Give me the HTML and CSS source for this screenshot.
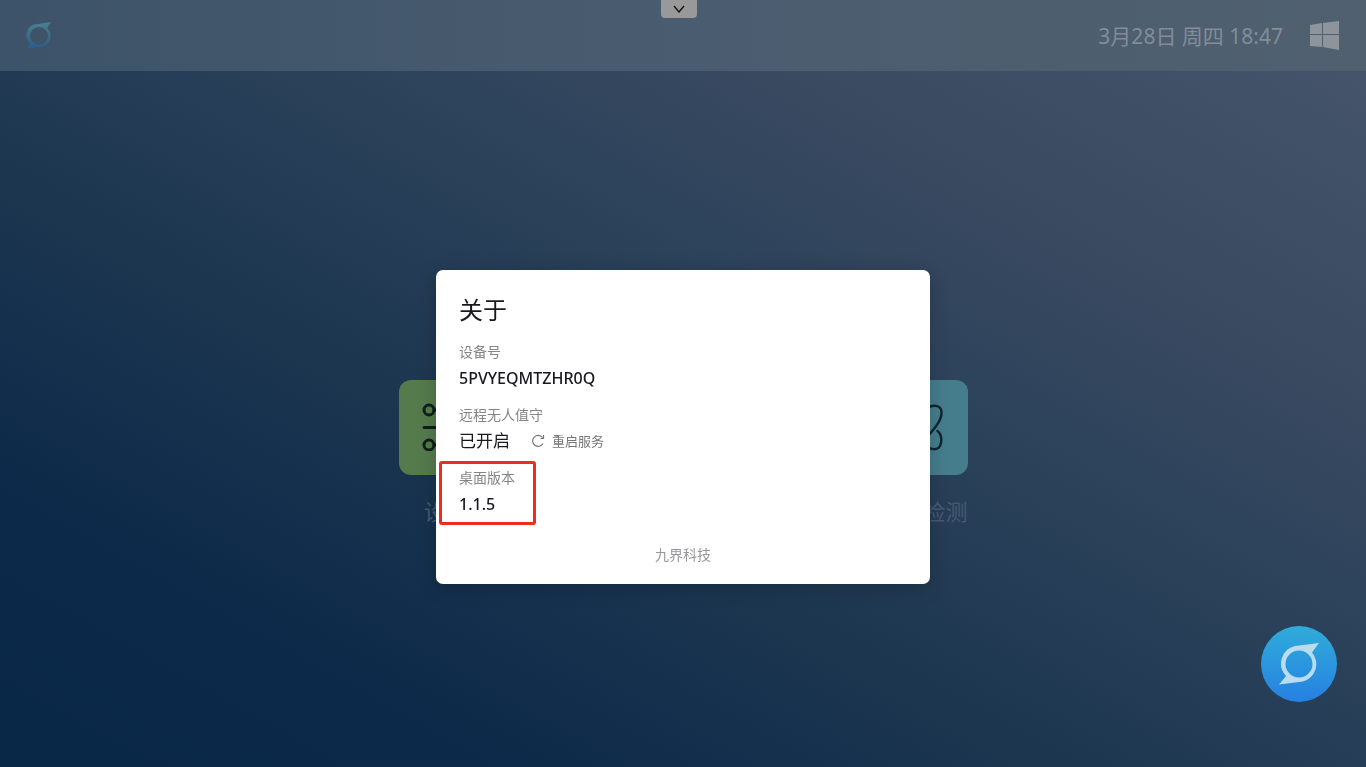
FILE: index.html
```html
<!DOCTYPE html>
<html lang="zh-CN">
<head>
<meta charset="utf-8">
<meta name="viewport" content="width=device-width, initial-scale=1">
<title>关于</title>
<link rel="stylesheet" href="styles.css">
</head>
<body class="desktop">
<header class="topbar">
  <svg class="brand" viewBox="0 0 28 30" aria-hidden="true">
    <defs><linearGradient id="brandFill" x1="0" y1="0" x2="0" y2="1"><stop offset="0" stop-color="#4f7e90"/><stop offset=".6" stop-color="#386a86"/><stop offset="1" stop-color="#2a5a90"/></linearGradient></defs>
    <path fill="url(#brandFill)" fill-rule="evenodd" d="M13 3 26 1 22 7A11 11 0 0 1 15 26L2 28 5 22A11 11 0 0 1 13 3ZM14 6A9 9 0 1 0 14 24A9 9 0 1 0 14 6Z"/>
  </svg>
  <div class="status">
    <time class="clock">3月28日 周四 18:47</time>
    <button class="windows" type="button" aria-label="Windows">
      <svg viewBox="0 0 29 29"><path fill="#8d949b" d="M0 4 12 2V13H0ZM13 2 29 0V13H13ZM0 14H12V26L0 25ZM13 14H29V29L13 26Z"/></svg>
    </button>
  </div>
</header>
<button class="pull" type="button" aria-label="展开">
  <svg viewBox="0 0 12 8"><path d="M1 1 6 7 11 1" fill="none" stroke="#141414" stroke-width="1.4"/></svg>
</button>
<main class="stage">
  <nav class="apps">
    <a class="app" href="#settings">
      <span class="tile tile-green">
        <svg class="glyph" viewBox="0 0 48 48" fill="none" stroke="#0f1f1b" stroke-width="3" stroke-linecap="round"><circle cx="7" cy="7" r="5"/><path d="M12 7H46M2 24.500H46M12 42H46"/><circle cx="7" cy="42" r="5"/></svg>
      </span>
      <span class="app-name">设置</span>
    </a>
    <a class="app app-end" href="#check">
      <span class="tile tile-teal">
        <svg class="glyph" viewBox="0 0 48 48" fill="none" stroke="#0d2430" stroke-width="2.4" stroke-linecap="round"><path d="M31 5C36 2 45 1 45.500 9C46 17 39 25 31 34M41.500 28C46 31 46 39 44 43C41 48 35 46 31 44"/></svg>
      </span>
      <span class="app-name">检测</span>
    </a>
  </nav>
</main>
<div class="overlay">
  <section class="dialog" role="dialog" aria-labelledby="dialogTitle">
    <h1 class="title" id="dialogTitle">关于</h1>
    <dl class="facts">
      <div class="fact"><dt>设备号</dt><dd>5PVYEQMTZHR0Q</dd></div>
      <div class="fact"><dt>远程无人值守</dt><dd class="remote">已开启
        <button class="restart" type="button"><svg viewBox="0 0 14 14" fill="none" stroke="#77777b" stroke-width="1.2"><path d="M11.500 3.500A5.500 5.500 0 1 0 12 9.500M12.500 1V4.500H9.500"/></svg>重启服务</button></dd></div>
      <div class="fact marked"><dt>桌面版本</dt><dd>1.1.5</dd></div>
    </dl>
    <p class="company">九界科技</p>
  </section>
</div>
<button class="assistant" type="button" aria-label="助手">
  <svg viewBox="0 0 42 42"><path fill="#b9dcf0" fill-rule="evenodd" d="M17 3 41 0 34 9.500A18 18 0 0 1 25 38.500L1 41.500 8 33A18 18 0 0 1 17 3ZM21 7.500A13.500 13.500 0 1 0 21 34.500A13.500 13.500 0 1 0 21 7.500Z"/></svg>
</button>
</body>
</html>
```
FILE: styles.css
```css
*,
*::after { box-sizing: border-box; }

.desktop {
  margin: 0;
  min-height: 100vh;
  display: flex;
  flex-direction: column;
  font-family: "Noto Sans", "Noto Sans CJK SC", sans-serif;
  background: linear-gradient(to top right, #092747 0%, #0c2949 18%, #1f3851 42%, #2c425b 58%, #3a4a61 75%, #47566b 100%);
}

button {
  padding: 0;
  border: 0;
  background: none;
  font: inherit;
  cursor: pointer;
}

svg { display: block; }

.topbar {
  display: flex;
  align-items: center;
  justify-content: space-between;
  height: 71px;
  padding: 0 27px 0 25px;
  background: linear-gradient(to right, #3d5369, #4a5c6f 50%, #50606f);
}

.brand { width: 28px; height: 30px; }

.status {
  display: flex;
  align-items: center;
  gap: 27px;
}

.clock {
  color: #818d99;
  font-size: 21px;
  line-height: 30px;
}

.windows svg { width: 29px; height: 29px; }

.pull {
  position: absolute;
  top: 0;
  left: calc(50% - 22px);
  display: grid;
  place-items: center;
  width: 36px;
  height: 18px;
  border-radius: 0 0 4px 4px;
  background: #999;
}

.pull svg { width: 12px; height: 8px; }

.stage {
  flex: 1;
  display: grid;
  place-items: center;
  padding-top: 68px;
}

.apps {
  display: flex;
  justify-content: space-between;
  width: 569px;
  max-width: 100%;
}

.app {
  display: flex;
  flex-direction: column;
  align-items: center;
  gap: 20px;
  color: #465a70;
  text-decoration: none;
}

.app-end { align-items: flex-end; }

.tile {
  display: grid;
  place-items: center;
  width: 95px;
  height: 95px;
  border-radius: 12px;
}

.tile-green { background: #557b4d; }
.tile-teal { background: #467d8d; }
.glyph { width: 48px; height: 48px; }

.app-name {
  font-size: 22px;
  line-height: 32px;
}

.overlay {
  position: fixed;
  inset: 0;
  display: grid;
  place-items: center;
  padding-top: 87px;
}

.dialog {
  width: 494px;
  max-width: 100%;
  padding: 22px 23px 19px;
  border-radius: 7px;
  background: #fff;
  box-shadow: 0 4px 20px rgba(0, 0, 0, .2);
  color: #18181e;
}

.title {
  margin: 0 0 12px;
  font-size: 24px;
  font-weight: 400;
  line-height: 36px;
}

.facts {
  display: grid;
  gap: 11px;
  margin: 0;
}

.fact dt {
  color: #858589;
  font-size: 14px;
  line-height: 24px;
}

.fact dd {
  margin: 0;
  font-size: 16px;
  font-weight: 500;
  line-height: 28px;
}

.fact .remote {
  display: flex;
  align-items: center;
  gap: 21px;
  font-size: 17px;
  font-weight: 400;
}

.restart {
  display: flex;
  align-items: center;
  gap: 7px;
  color: #77777b;
  font-size: 13px;
}

.restart svg { width: 14px; height: 14px; }

.marked { position: relative; }

.marked::after {
  content: "";
  position: absolute;
  top: -5px;
  left: -20px;
  width: 97px;
  height: 64px;
  border: 3px solid #f12b20;
  border-radius: 3px;
}

.company {
  margin: 27px 0 0;
  color: #97979b;
  font-size: 14px;
  line-height: 20px;
  text-align: center;
}

.assistant {
  position: fixed;
  right: 29px;
  bottom: 65px;
  display: grid;
  place-items: center;
  width: 76px;
  height: 76px;
  border-radius: 50%;
  background: linear-gradient(#30acda, #2680e2);
}

.assistant svg { width: 42px; height: 42px; }
```
